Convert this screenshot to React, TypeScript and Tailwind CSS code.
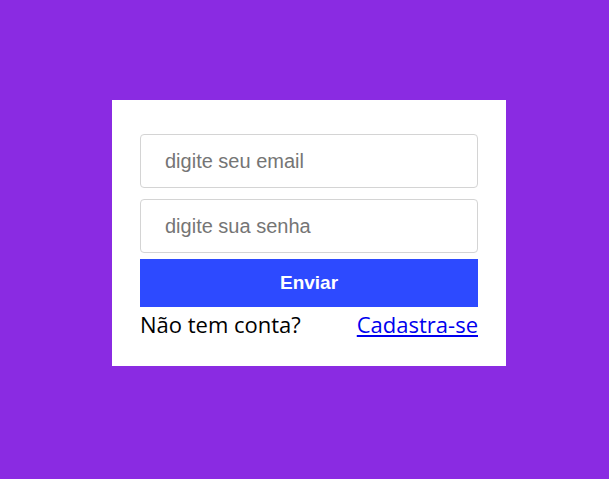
export default function App() {
  return (
    <div className="w-[609px] h-[479px] bg-[#8a2be2] flex items-start justify-start pt-[100px] pl-[112px]">
      <div className="w-[394px] bg-white pt-[34px] px-[28px] pb-[27px] flex flex-col">
        <input
          placeholder="digite seu email"
          className="h-[54px] w-full border border-[#d4d4d4] rounded-[4px] pl-[24px] text-[20px] text-black placeholder:text-[#757575] outline-none font-['Liberation_Sans',Arial,sans-serif]"
        />
        <input
          type="password"
          placeholder="digite sua senha"
          className="mt-[11px] h-[54px] w-full border border-[#d4d4d4] rounded-[4px] pl-[24px] text-[20px] text-black placeholder:text-[#757575] outline-none font-['Liberation_Sans',Arial,sans-serif]"
        />
        <button className="mt-[6px] h-[48px] w-full bg-[#2d4aff] text-white font-bold text-[19px] font-['Liberation_Sans',Arial,sans-serif]">
          Enviar
        </button>
        <div className="mt-[2px] flex justify-between items-baseline text-[22px] leading-[30px] text-black font-['Open_Sans','Noto_Sans',sans-serif]">
          <span>Não tem conta?</span>
          <a href="#" className="text-[#0000ee] underline">Cadastra-se</a>
        </div>
      </div>
    </div>
  );
}
